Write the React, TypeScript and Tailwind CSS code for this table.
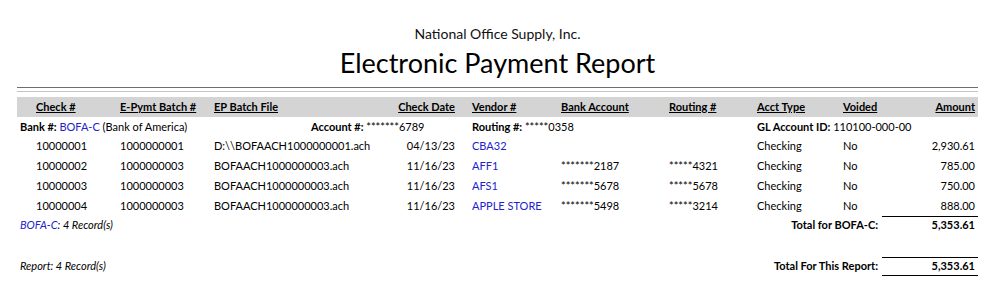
import React from "react";

type Row = {
  check: string;
  batch: string;
  file: string;
  date: string;
  vendor: string;
  account: string;
  routing: string;
  type: string;
  voided: string;
  amount: string;
};

const rows: Row[] = [
  {
    check: "10000001",
    batch: "1000000001",
    file: "D:\\\\BOFAACH1000000001.ach",
    date: "04/13/23",
    vendor: "CBA32",
    account: "",
    routing: "",
    type: "Checking",
    voided: "No",
    amount: "2,930.61",
  },
  {
    check: "10000002",
    batch: "1000000003",
    file: "BOFAACH1000000003.ach",
    date: "11/16/23",
    vendor: "AFF1",
    account: "*******2187",
    routing: "*****4321",
    type: "Checking",
    voided: "No",
    amount: "785.00",
  },
  {
    check: "10000003",
    batch: "1000000003",
    file: "BOFAACH1000000003.ach",
    date: "11/16/23",
    vendor: "AFS1",
    account: "*******5678",
    routing: "*****5678",
    type: "Checking",
    voided: "No",
    amount: "750.00",
  },
  {
    check: "10000004",
    batch: "1000000003",
    file: "BOFAACH1000000003.ach",
    date: "11/16/23",
    vendor: "APPLE STORE",
    account: "*******5498",
    routing: "*****3214",
    type: "Checking",
    voided: "No",
    amount: "888.00",
  },
];

const cols =
  "grid grid-cols-[103px_94px_163px_78px_106px_108px_88px_86px_54px_78px]";

export default function App() {
  return (
    <div className="w-[997px] h-[295px] bg-white text-black font-['Lato',sans-serif] text-[11px]">
      <div className="ml-[17px] w-[961px]">
        <div className="pt-[25px] text-center text-[14px] leading-[18px] text-[#111]">
          National Office Supply, Inc.
        </div>
        <div className="text-center text-[27px] leading-[34px] mt-[3px]">
          Electronic Payment Report
        </div>

        <div className="mt-[7px] border-t border-[#6f6f6f]" />
        <div className="mt-[3px] border-t border-[#c4c4c4]" />

        <div className={`${cols} mt-[5px] h-[20px] items-center bg-[#d4d4d4] font-bold underline`}>
          <div className="pl-[19px]">Check #</div>
          <div>E-Pymt Batch #</div>
          <div>EP Batch File</div>
          <div className="text-right">Check Date</div>
          <div className="pl-[17px]">Vendor #</div>
          <div>Bank Account</div>
          <div>Routing #</div>
          <div>Acct Type</div>
          <div>Voided</div>
          <div className="text-right">Amount</div>
        </div>

        <div className="flex h-[19.5px] items-center">
          <div className="w-[294px] pl-[3px]">
            <span className="font-bold">Bank #: </span>
            <span className="text-[#2222cc]">BOFA-C</span> (Bank of America)
          </div>
          <div className="w-[161px]">
            <span className="font-bold">Account #: </span>*******6789
          </div>
          <div className="w-[285px]">
            <span className="font-bold">Routing #: </span>*****0358
          </div>
          <div>
            <span className="font-bold">GL Account ID: </span>110100-000-00
          </div>
        </div>

        {rows.map((r) => (
          <div key={r.check} className={`${cols} h-[19.8px] items-center`}>
            <div className="pl-[19px]">{r.check}</div>
            <div>{r.batch}</div>
            <div>{r.file}</div>
            <div className="text-right">{r.date}</div>
            <div className="pl-[17px] text-[#2222cc]">{r.vendor}</div>
            <div>{r.account}</div>
            <div>{r.routing}</div>
            <div>{r.type}</div>
            <div>{r.voided}</div>
            <div className="text-right">{r.amount}</div>
          </div>
        ))}

        <div className="flex h-[19px] items-stretch">
          <div className="flex flex-1 items-center pl-[3px] italic">
            <span className="text-[#2222cc]">BOFA-C</span>: 4 Record(s)
          </div>
          <div className="flex items-center pr-[4px] font-bold">Total for BOFA-C:</div>
          <div className="flex w-[96px] items-center justify-end border-t border-black pr-[3px] font-bold">
            5,353.61
          </div>
        </div>

        <div className="mt-[22px] flex h-[19px] items-stretch">
          <div className="flex flex-1 items-center pl-[3px] italic">Report: 4 Record(s)</div>
          <div className="flex items-center pr-[4px] font-bold">Total For This Report:</div>
          <div className="flex w-[96px] items-center justify-end border-y border-black pr-[3px] font-bold">
            5,353.61
          </div>
        </div>
      </div>
    </div>
  );
}
